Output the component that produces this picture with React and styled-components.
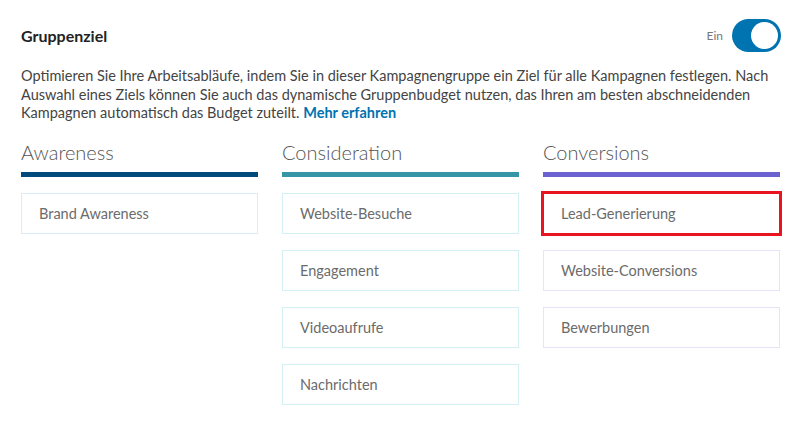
import React, {useState} from "react";
import styled, {createGlobalStyle} from "styled-components";

const GlobalStyles = createGlobalStyle`
    body{
        margin: 0;
        background: #fff;
        font-family: "Lato", "Open Sans", sans-serif;
    }
`

const columns = [
    {
        title: "Awareness",
        bar: "#004b7c",
        border: "#dcebf8",
        items: ["Brand Awareness"]
    },
    {
        title: "Consideration",
        bar: "#3597a6",
        border: "#d3f1f4",
        items: ["Website-Besuche", "Engagement", "Videoaufrufe", "Nachrichten"]
    },
    {
        title: "Conversions",
        bar: "#6a62d0",
        border: "#e6e4fb",
        items: ["Lead-Generierung", "Website-Conversions", "Bewerbungen"]
    }
]

const StyledPanel = styled.div`
    width: 800px;
    height: 424px;
    box-sizing: border-box;
    padding: 19px 19px 0 21px;
    color: #333;
`

const StyledHeader = styled.div`
    display: flex;
    align-items: center;
    justify-content: space-between;
    height: 33px;
    h2{
        margin: 0;
        font-size: 16px;
        font-weight: 700;
        color: #222;
    }
`

const StyledToggleWrap = styled.label`
    display: flex;
    align-items: center;
    gap: 9px;
    font-size: 12px;
    color: #777;
    cursor: pointer;
`

const StyledSwitch = styled.span`
    position: relative;
    width: 49px;
    height: 33px;
    border-radius: 17px;
    background-color: ${props => props.on ? "#0073b1" : "#aaa"};
    &::after{
        content: "";
        position: absolute;
        top: 3px;
        left: ${props => props.on ? "19px" : "3px"};
        width: 27px;
        height: 27px;
        border-radius: 50%;
        background: #fff;
    }
`

const StyledText = styled.p`
    margin: 15px 0 0;
    font-size: 14.5px;
    line-height: 18.5px;
    color: #444;
    a{
        color: #0073b1;
        font-weight: 700;
        text-decoration: none;
    }
`

const StyledColumns = styled.div`
    display: grid;
    grid-template-columns: repeat(3, 237px);
    column-gap: 24px;
    margin-top: 16px;
`

const StyledColumn = styled.div`
    display: flex;
    flex-direction: column;
    gap: 16px;
`

const StyledColumnTitle = styled.div`
    font-size: 20px;
    font-weight: 300;
    line-height: 26px;
    color: #555;
    padding-bottom: 7px;
    border-bottom: 5px solid ${props => props.bar};
`

const StyledCard = styled.div`
    height: 41px;
    box-sizing: border-box;
    display: flex;
    align-items: center;
    padding-left: 17px;
    font-size: 14.5px;
    color: #6b6b6b;
    border: 1px solid ${props => props.border};
    background: #fff;
    outline: ${props => props.marked ? "3px solid #e8141f" : "none"};
    outline-offset: -1px;
`

const App = () => {
    let [on, setOn] = useState(true);
    return (
        <StyledPanel>
            <StyledHeader>
                <h2>Gruppenziel</h2>
                <StyledToggleWrap onClick={() => setOn(!on)}>
                    Ein
                    <StyledSwitch on={on ? 1 : 0} />
                </StyledToggleWrap>
            </StyledHeader>
            <StyledText>
                Optimieren Sie Ihre Arbeitsabläufe, indem Sie in dieser Kampagnengruppe ein Ziel für alle Kampagnen festlegen. Nach<br />
                Auswahl eines Ziels können Sie auch das dynamische Gruppenbudget nutzen, das Ihren am besten abschneidenden<br />
                Kampagnen automatisch das Budget zuteilt. <a href="#">Mehr erfahren</a>
            </StyledText>
            <StyledColumns>
                {columns.map(col => (
                    <StyledColumn key={col.title}>
                        <StyledColumnTitle bar={col.bar}>{col.title}</StyledColumnTitle>
                        {col.items.map(item => (
                            <StyledCard key={item} border={col.border} marked={item === "Lead-Generierung" ? 1 : 0}>
                                {item}
                            </StyledCard>
                        ))}
                    </StyledColumn>
                ))}
            </StyledColumns>
            <GlobalStyles />
        </StyledPanel>
    )
}

export default App;
